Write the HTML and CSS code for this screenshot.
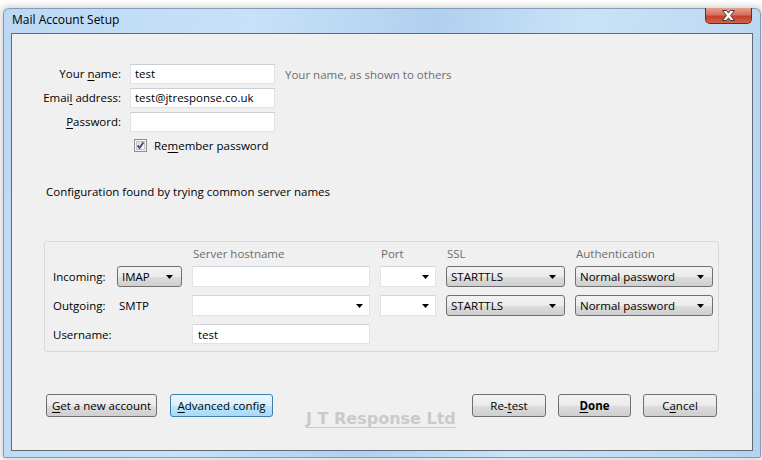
FILE: index.html
```html
<!DOCTYPE html>
<html>
<head>
<meta charset="utf-8">
<title>Mail Account Setup</title>
<link rel="stylesheet" href="styles.css">
</head>
<body>
<div class="window">
  <div class="titlebar">
    <span class="title">Mail Account Setup</span>
    <div class="close">
      <svg width="15" height="11" viewBox="0 0 15 11"><path d="M1.5 0.5h4l2 2.6 2-2.6h4l-4 5 4 5h-4l-2-2.6-2 2.6h-4l4-5z" fill="#fff" stroke="#4a3a38" stroke-width="1" stroke-linejoin="round"/></svg>
    </div>
  </div>
  <div class="client">
    <div class="form">
      <label class="lbl">Your <u>n</u>ame:</label>
      <div class="input">test</div>
      <span class="hint">Your name, as shown to others</span>
      <label class="lbl">Emai<u>l</u> address:</label>
      <div class="input">test@jtresponse.co.uk</div>
      <span></span>
      <label class="lbl"><u>P</u>assword:</label>
      <div class="input"></div>
      <span></span>
    </div>
    <div class="check-row">
      <svg class="checkbox" width="13" height="13" viewBox="0 0 13 13">
        <defs><linearGradient id="cb" x1="0" y1="0" x2="1" y2="1"><stop offset="0" stop-color="#d9d9d9"/><stop offset="1" stop-color="#fbfbfb"/></linearGradient></defs>
        <rect x="0.5" y="0.5" width="12" height="12" fill="#f6f6f6" stroke="#8e8f8f"/>
        <rect x="2.5" y="2.5" width="8" height="8" fill="url(#cb)" stroke="#c4c4c4"/>
        <path d="M3.6 6.4 L5.6 9 L9.4 3.2" stroke="#3a4c82" stroke-width="1.8" fill="none"/>
      </svg>
      <span>Re<u>m</u>ember password</span>
    </div>
    <p class="status">Configuration found by trying common server names</p>
    <div class="group">
      <span></span><span></span>
      <span class="head">Server hostname</span>
      <span class="head">Port</span>
      <span class="head">SSL</span>
      <span class="head">Authentication</span>

      <span class="glbl">Incoming:</span>
      <div class="select proto">IMAP<svg class="arrow" width="7" height="4" viewBox="0 0 7 4"><path d="M0 0h7L3.5 4z"/></svg></div>
      <div class="field"></div>
      <div class="field combo"><svg class="arrow" width="7" height="4" viewBox="0 0 7 4"><path d="M0 0h7L3.5 4z"/></svg></div>
      <div class="select">STARTTLS<svg class="arrow" width="7" height="4" viewBox="0 0 7 4"><path d="M0 0h7L3.5 4z"/></svg></div>
      <div class="select">Normal password<svg class="arrow" width="7" height="4" viewBox="0 0 7 4"><path d="M0 0h7L3.5 4z"/></svg></div>

      <span class="glbl">Outgoing:</span>
      <span class="glbl smtp">SMTP</span>
      <div class="field combo"><svg class="arrow" width="7" height="4" viewBox="0 0 7 4"><path d="M0 0h7L3.5 4z"/></svg></div>
      <div class="field combo"><svg class="arrow" width="7" height="4" viewBox="0 0 7 4"><path d="M0 0h7L3.5 4z"/></svg></div>
      <div class="select">STARTTLS<svg class="arrow" width="7" height="4" viewBox="0 0 7 4"><path d="M0 0h7L3.5 4z"/></svg></div>
      <div class="select">Normal password<svg class="arrow" width="7" height="4" viewBox="0 0 7 4"><path d="M0 0h7L3.5 4z"/></svg></div>

      <span class="glbl">Username:</span>
      <span></span>
      <div class="field short">test</div>
    </div>
    <div class="buttons">
      <div class="btn-group">
        <button class="btn w111"><u>G</u>et a new account</button>
        <button class="btn w103 hot"><u>A</u>dvanced config</button>
      </div>
      <div class="btn-group tight">
        <button class="btn w74">Re-<u>t</u>est</button>
        <button class="btn w73 bold"><u>D</u>one</button>
        <button class="btn w74">C<u>a</u>ncel</button>
      </div>
      <span class="watermark">J T Response Ltd</span>
    </div>
  </div>
</div>
</body>
</html>
```

FILE: styles.css
```css
* { box-sizing: border-box; }
html, body { margin: 0; padding: 0; }
body {
  width: 762px;
  height: 460px;
  background: #ffffff;
  font-family: "Open Sans", "Noto Sans", sans-serif;
  font-size: 11.5px;
  color: #000;
  overflow: hidden;
}
u { text-decoration: underline; text-underline-offset: 2px; }

.window {
  margin: 8px 0 0 3px;
  width: 758px;
  height: 450px;
  padding: 0 7px 6px 7px;
  display: flex;
  flex-direction: column;
  border-radius: 6px 6px 2px 2px;
  border: 1px solid rgba(60, 80, 110, 0.45);
  background: linear-gradient(100deg, #bcd8f3 0%, #c7e1f8 30%, #b1d0ee 52%, #c9e2f7 70%, #b6d3ee 100%);
  box-shadow: 0 0 7px 2px rgba(0, 0, 0, 0.18);
}
.titlebar {
  height: 24px;
  display: flex;
  align-items: flex-start;
  justify-content: space-between;
}
.title {
  margin-top: 3px;
  padding-left: 1px;
  line-height: 16px;
  font-size: 12px;
  color: #000;
}
.close {
  width: 47px;
  height: 16px;
  margin-right: 1px;
  margin-top: -1px;
  border: 1px solid #6b2b22;
  border-top: none;
  border-radius: 0 0 5px 5px;
  background: linear-gradient(#e4a090 0%, #d8705c 45%, #c4412b 55%, #d0624a 100%);
  display: flex;
  align-items: center;
  justify-content: center;
}

.client {
  flex: 1;
  border: 1px solid #5e6b7b;
  background: #f0f0f0;
  padding-top: 30px;
  display: flex;
  flex-direction: column;
  position: relative;
}

.form {
  display: grid;
  grid-template-columns: 109px 145px auto;
  column-gap: 9px;
  row-gap: 4px;
  grid-auto-rows: 20px;
  align-items: center;
}
.lbl { text-align: right; line-height: 20px; }
.input {
  height: 20px;
  background: #fff;
  border: 1px solid #dfe3e8;
  border-top-color: #c9ced6;
  padding: 0 4px;
  line-height: 18px;
}
.hint { color: #6d6d6d; padding-left: 1px; }

.check-row {
  margin: 5px 0 0 122px;
  height: 16px;
  display: flex;
  align-items: center;
  gap: 7px;
}
.checkbox { display: block; }

.status {
  margin: 31px 0 0 34px;
  line-height: 16px;
}

.group {
  margin: 41px 0 0 32px;
  width: 675px;
  height: 111px;
  border: 1px solid #d5dade;
  border-radius: 3px;
  padding: 0 5px 0 8px;
  display: grid;
  grid-template-columns: 54px 65px 178px 56px 119px 138px;
  grid-template-rows: 24px 29px 29px 20px;
  column-gap: 10px;
  align-items: start;
}
.head {
  color: #6d6d6d;
  padding: 4px 0 0 1px;
  line-height: 16px;
}
.glbl { line-height: 21px; white-space: nowrap; }
.smtp { padding-left: 2px; }
.select {
  height: 21px;
  border: 1px solid #707070;
  border-radius: 3px;
  background: linear-gradient(#f2f2f2 0%, #ebebeb 50%, #dddddd 51%, #cfcfcf 100%);
  padding: 0 8px 0 4px;
  display: flex;
  align-items: center;
  justify-content: space-between;
  line-height: 19px;
}
.field {
  height: 21px;
  background: #fff;
  border: 1px solid #e0e4e9;
  border-top-color: #d2d6dc;
  padding: 0 5px;
  line-height: 19px;
  display: flex;
  align-items: center;
  justify-content: flex-end;
}
.field.short { height: 20px; justify-content: flex-start; }
.combo { padding-right: 6px; }
.arrow { display: block; flex: none; }

.buttons {
  margin: 42px 35px 0 34px;
  display: flex;
  align-items: center;
  justify-content: space-between;
  height: 23px;
}
.btn-group { display: flex; gap: 13px; }
.btn-group.tight { gap: 12px; }
.btn {
  height: 23px;
  font: inherit;
  color: #000;
  border: 1px solid #707070;
  border-radius: 3px;
  background: linear-gradient(#f2f2f2 0%, #ebebeb 50%, #dddddd 51%, #cfcfcf 100%);
  padding: 0;
  line-height: 20px;
  white-space: nowrap;
}
.btn.hot {
  border-color: #3c7fb1;
  background: linear-gradient(#eaf6fd 0%, #d9f0fc 50%, #bee6fd 51%, #a7d9f5 100%);
}
.btn.bold { font-weight: 700; }
.w111 { width: 111px; }
.w103 { width: 103px; }
.w74 { width: 74px; }
.w73 { width: 73px; }
.watermark {
  position: absolute;
  left: 294px;
  top: 375px;
  font-family: "DejaVu Sans", "Open Sans", sans-serif;
  font-size: 16px;
  font-weight: 700;
  color: #cacaca;
  text-decoration: underline;
  text-underline-offset: 3px;
  white-space: nowrap;
}
```
